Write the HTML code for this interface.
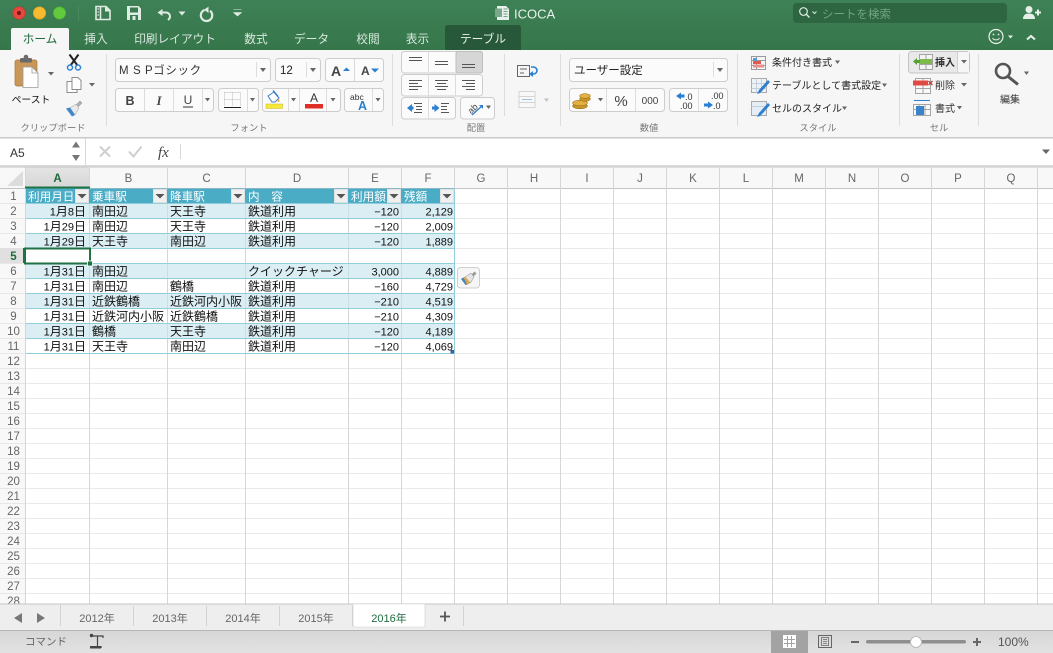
<!DOCTYPE html>
<html lang="ja"><head><meta charset="utf-8"><title>ICOCA</title>
<style>
html,body{margin:0;padding:0;width:1053px;height:653px;overflow:hidden;background:#fff}
svg{display:block;font-family:"Liberation Sans","Noto Sans CJK JP",sans-serif}
.rb{fill:#fbfbfb;stroke:#cdcdcd}
.tab{font-size:11.7px;fill:#d8e8dd;text-anchor:middle}
.lab{font-size:9.3px;fill:#777;text-anchor:middle}
.c{font-size:12px;fill:#111}
.n{font-size:11px;fill:#111;text-anchor:end}
.d{font-size:12px;fill:#111;text-anchor:end}
.d tspan{font-size:11px}
.h{font-size:11.6px;fill:#fff}
.cl{font-size:11.5px;fill:#666;text-anchor:middle}
.rl{font-size:11.5px;fill:#666;text-anchor:middle}
.sh{font-size:11px;fill:#666;text-anchor:middle}
.st{font-size:10px;fill:#222}
.ar{fill:#666}
</style></head><body>
<svg width="1053" height="653" viewBox="0 0 1053 653" xmlns="http://www.w3.org/2000/svg">
<defs>
<linearGradient id="tb" x1="0" y1="0" x2="0" y2="1"><stop offset="0" stop-color="#3f8156"/><stop offset="1" stop-color="#35764a"/></linearGradient>
<linearGradient id="sb" x1="0" y1="0" x2="0" y2="1"><stop offset="0" stop-color="#d6d6d6"/><stop offset="1" stop-color="#e2e2e2"/></linearGradient>
<linearGradient id="hl" x1="0" y1="0" x2="0" y2="1"><stop offset="0" stop-color="#e4e4e4"/><stop offset="1" stop-color="#d6d6d6"/></linearGradient>
<pattern id="hg" x="0" y="188.500" width="1053" height="15" patternUnits="userSpaceOnUse"><rect y="14.500" width="1053" height="1" fill="#d6d6d6"/></pattern>
</defs>

<!-- title bar -->
<rect width="1053" height="50" fill="url(#tb)"/>
<circle cx="19" cy="13" r="6.200" fill="#e6483f" stroke="#c5362e" stroke-width=".7"/><circle cx="19" cy="13" r="2.100" fill="#7d1712"/>
<circle cx="39.500" cy="13" r="6.200" fill="#f6bb30" stroke="#d89e25" stroke-width=".7"/>
<circle cx="59.500" cy="13" r="6.200" fill="#62ca3e" stroke="#4cab2f" stroke-width=".7"/>
<line x1="78.500" y1="5" x2="78.500" y2="21" stroke="#4a8a60"/>
<g fill="none" stroke="#dfece3" stroke-width="1.600">
<path d="M96 6.500h10l4 4v9h-14z"/><path d="M100.500 6.500v13"/>
</g>
<path d="M105 6.500v5h5z" fill="#dfece3"/>
<path d="M97.500 9h1.500M97.500 12h1.500M97.500 15h1.500" stroke="#dfece3" stroke-width="1.200"/>
<path d="M127 6h11.500l2.500 2.500V20h-14z" fill="#dfece3"/>
<rect x="130" y="7.500" width="8" height="5" fill="#3b7b50"/><rect x="130" y="15" width="8" height="5" fill="#3b7b50"/><rect x="132.500" y="16" width="3" height="4" fill="#dfece3"/>
<path d="M157.500 12.500l5 -3.500v7z" fill="#dfece3"/>
<path d="M161 12.500h5.500a4 4 0 0 1 3.500 4c0 1.500 -1 2.700 -2 3.500" fill="none" stroke="#dfece3" stroke-width="2"/>
<path d="M178.500 11.500h7l-3.500 4z" fill="#dfece3"/>
<path d="M204.500 10a5.700 5.700 0 1 0 5.500 .8" fill="none" stroke="#dfece3" stroke-width="2.200"/>
<path d="M204 9.800l4.500 -3.200v6.400z" fill="#dfece3"/>
<path d="M233.500 9.500h8M233.500 12.500h8l-4 3.500z" fill="#dfece3" stroke="#dfece3" stroke-width=".6"/>
<!-- doc title -->
<path d="M497 6h9l3 3v11h-12z" fill="#e9f1ec"/><rect x="495" y="8.500" width="7" height="8.500" fill="#7aa88a"/><path d="M503.500 9h4M503.500 11.500h4M503.500 14h4M503.500 16.500h4" stroke="#6e9f80"/>
<text x="514" y="18.500" font-size="13" fill="#e8f2eb">ICOCA</text>
<!-- search -->
<rect x="793" y="3" width="214" height="20" rx="4" fill="#2d6640"/>
<circle cx="803.500" cy="11.500" r="3.800" fill="none" stroke="#dfece3" stroke-width="1.200"/><path d="M806.500 14.500l3 3" stroke="#dfece3" stroke-width="1.400"/>
<path d="M812.500 11.500l2 2l2 -2" fill="none" stroke="#dfece3"/>
<text x="822" y="18" font-size="11.500" fill="#72a583">シートを検索</text>
<circle cx="1029" cy="9.500" r="3.500" fill="#e6f0e9"/><path d="M1023 19c0 -4 2.500 -5.500 6 -5.500s6 1.500 6 5.500z" fill="#e6f0e9"/><path d="M1035 12.500h6M1038 9.500v6" stroke="#e6f0e9" stroke-width="2"/>
<!-- tabs -->
<path d="M11 50V30q0 -2 2 -2h54q2 0 2 2v20z" fill="#f6f6f6"/>
<text x="40" y="43" font-size="11.700" fill="#1f6b3d" text-anchor="middle">ホーム</text>
<text class="tab" x="96" y="43">挿入</text>
<text class="tab" x="175" y="43">印刷レイアウト</text>
<text class="tab" x="256" y="43">数式</text>
<text class="tab" x="311.500" y="43">データ</text>
<text class="tab" x="368" y="43">校閲</text>
<text class="tab" x="417.500" y="43">表示</text>
<path d="M445 50V28q0 -3 3 -3h70q3 0 3 3v22z" fill="#28583a"/>
<text x="483" y="43" font-size="11.700" fill="#e8f2eb" text-anchor="middle">テーブル</text>
<circle cx="996" cy="36.500" r="7" fill="none" stroke="#e6f0e9" stroke-width="1.200"/><circle cx="993.500" cy="34.500" r=".9" fill="#e6f0e9"/><circle cx="998.500" cy="34.500" r=".9" fill="#e6f0e9"/><path d="M992.500 38c1.500 2.500 5.500 2.500 7 0" fill="none" stroke="#e6f0e9"/>
<path d="M1008 35.500h5l-2.500 3z" fill="#e6f0e9"/>
<path d="M1027 39.500l4 -3.500l4 3.500" fill="none" stroke="#e6f0e9" stroke-width="2"/>

<!-- ribbon -->
<rect y="50" width="1053" height="87" fill="#f6f6f6"/>
<rect y="137" width="1053" height="1.500" fill="#c9c9c9"/>
<path d="M106.500 54v72M392.500 54v72M504.500 54v62M560.500 54v72M737.500 54v72M899.500 54v72M978.500 54v72" stroke="#dcdcdc"/>
<text class="lab" x="53" y="131">クリップボード</text>
<text class="lab" x="249" y="131">フォント</text>
<text class="lab" x="476" y="131">配置</text>
<text class="lab" x="649" y="131">数値</text>
<text class="lab" x="818" y="131">スタイル</text>
<text class="lab" x="939" y="131">セル</text>

<!-- clipboard -->
<rect x="15" y="60" width="22" height="26" rx="2" fill="#c99758" stroke="#a9763c" stroke-width=".7"/>
<rect x="20" y="58" width="12" height="4.500" rx="1.500" fill="#6a6a6a"/><circle cx="26" cy="57" r="2.300" fill="#6a6a6a"/>
<path d="M23 67h9l6 6v14.500H23z" fill="#fff" stroke="#9a9a9a" stroke-width=".8"/><path d="M32 67v6h6" fill="none" stroke="#9a9a9a" stroke-width=".8"/>
<path class="ar" d="M48 72h6l-3 3.500z"/>
<text x="31" y="103" font-size="9.800" fill="#111" text-anchor="middle">ペースト</text>
<path d="M69.500 54.500l8 11M78.500 54.500l-8 11" stroke="#222" stroke-width="2"/>
<circle cx="70" cy="67.500" r="2.500" fill="none" stroke="#2f80d0" stroke-width="1.500"/><circle cx="78" cy="67.500" r="2.500" fill="none" stroke="#2f80d0" stroke-width="1.500"/>
<path d="M72 77.500h6l3 3v9h-4v3h-10v-11h5z" fill="#fff" stroke="#8c8c8c"/><path d="M72 81.500v8h5" fill="none" stroke="#8c8c8c"/>
<path class="ar" d="M89 83h6l-3 3.500z"/>
<path d="M76 105l4 -4l2 2l-4 4z" fill="#b0b0b0" stroke="#8a8a8a" stroke-width=".5"/><path d="M70 108l6 -4l3 4l-4 7z" fill="#e9e9e9" stroke="#9a9a9a" stroke-width=".5"/><path d="M66 108.500l4 -1l5 7.500l-3 1.500z" fill="#3f86cb"/>

<!-- font -->
<rect class="rb" x="115.500" y="58.500" width="155" height="23" rx="3"/><path d="M256.500 62v15" stroke="#ddd"/><path class="ar" d="M260 68h6l-3 4z"/>
<text x="119" y="74" font-size="11.500" fill="#333" letter-spacing=".6">M S  Pゴシック</text>
<rect class="rb" x="275.500" y="58.500" width="45" height="23" rx="3"/><path d="M306.500 62v15" stroke="#ddd"/><path class="ar" d="M310 68h6l-3 4z"/>
<text x="280" y="74" font-size="11.500" fill="#222">12</text>
<rect class="rb" x="325.500" y="58.500" width="58" height="23" rx="3" fill="#f3f3f3"/><path d="M354.500 59v22" stroke="#d8d8d8"/>
<text x="331" y="76" font-size="14" font-weight="700" fill="#444">A</text><path d="M343 71l3.500 -3.500l3.500 3.500z" fill="#2b7fd0"/>
<text x="361" y="75" font-size="12" font-weight="700" fill="#444">A</text><path d="M371 68.500h8l-4 4z" fill="#2b7fd0"/>
<rect class="rb" x="115.500" y="88.500" width="98" height="23" rx="3"/><path d="M144.500 89v22M173.500 89v22M202.500 89v22" stroke="#dcdcdc"/>
<text x="130" y="105" font-size="12.500" font-weight="700" fill="#444" text-anchor="middle">B</text>
<text x="159" y="105" font-size="12.500" font-weight="700" font-style="italic" font-family="Liberation Serif" fill="#444" text-anchor="middle">I</text>
<text x="188" y="104" font-size="12" fill="#444" text-anchor="middle">U</text><path d="M183 107h10" stroke="#333"/>
<path class="ar" d="M205 98h5l-2.500 3.500z"/>
<rect class="rb" x="218.500" y="88.500" width="40" height="23" rx="3"/><path d="M247.500 89v22" stroke="#dcdcdc"/>
<path d="M224.500 92.500h16v14M224.500 92.500v14M232.500 92.500v14M224.500 99.500h16" stroke="#bbb" stroke-dasharray="1 1" fill="none"/><path d="M224 107.500h17" stroke="#222"/>
<path class="ar" d="M250 98h5l-2.500 3.500z"/>
<rect class="rb" x="262.500" y="88.500" width="78" height="23" rx="3"/><path d="M299.500 89v22M326.500 89v22M288.500 89v22" stroke="#dcdcdc"/>
<path d="M268 96l6 -4l5 6l-4 4h-3z" fill="#fff" stroke="#3c7fc4"/><path d="M273 90.500l5 6" stroke="#3c7fc4" stroke-width="1.500"/><path d="M278.500 99c1 1.200 1.500 2.500 0 3c-1.500 -.5 -1 -1.800 0 -3z" fill="#e8a33a"/>
<rect x="266" y="104" width="16.500" height="4.500" fill="#f6e838" stroke="#c7b92b" stroke-width=".5"/>
<path class="ar" d="M291 98h5l-2.500 3.500z"/>
<text x="314" y="102" font-size="12" fill="#333" text-anchor="middle">A</text><rect x="305" y="104" width="18" height="4.500" fill="#df2f24"/>
<path class="ar" d="M330.500 98h5l-2.500 3.500z"/>
<rect class="rb" x="344.500" y="88.500" width="39" height="23" rx="3"/><path d="M372.500 89v22" stroke="#dcdcdc"/>
<text x="350" y="100" font-size="8.500" fill="#333">abc</text><text x="358" y="110" font-size="12.500" font-weight="700" fill="#2b7fd0">A</text>
<path class="ar" d="M375.500 98h5l-2.500 3.500z"/>

<!-- alignment -->
<rect class="rb" x="401.500" y="51.500" width="81" height="21.500" rx="3"/><rect x="456" y="51.500" width="26.500" height="21.500" rx="2" fill="#d6d6d6" stroke="#bdbdbd"/><path d="M428.500 52v21" stroke="#dcdcdc"/>
<path d="M409 57.500h13M409 60.500h13M435 61.500h13M435 64.500h13M462 64.500h13M462 67.500h13" stroke="#555"/>
<rect class="rb" x="401.500" y="74.500" width="81" height="21.500" rx="3"/><path d="M428.500 75v21M455.500 75v21" stroke="#dcdcdc"/>
<path d="M409 80.500h13M409 83.500h9M409 86.500h13M409 89.500h9M435 80.500h13M437 83.500h9M435 86.500h13M437 89.500h9M462 80.500h13M466 83.500h9M462 86.500h13M466 89.500h9" stroke="#555"/>
<rect class="rb" x="401.500" y="97.500" width="54" height="21.500" rx="3"/><path d="M428.500 98v21" stroke="#dcdcdc"/>
<path d="M414 103.500h8M416 106.500h6M416 109.500h6M414 112.500h8M441 103.500h8M441 106.500h6M441 109.500h6M441 112.500h8" stroke="#555"/>
<path d="M407 108l5 -4v2.500h1.500v3H412v2.500z" fill="#2b7fd0"/><path d="M439.500 108l-5 -4v2.500h-2.500v3h2.500v2.500z" fill="#2b7fd0"/>
<rect class="rb" x="460.500" y="97.500" width="34" height="21.500" rx="3"/>
<text x="467" y="112" font-size="9" fill="#444" transform="rotate(-45 472 108)">ab</text><path d="M472 115l10 -9" stroke="#2b7fd0" stroke-width="1.200"/><path d="M479 105h4v4z" fill="#2b7fd0"/>
<path class="ar" d="M486 105.500h5l-2.500 3.500z"/>
<path d="M517.500 65.500h12v11h-12zM520 69h7M520 73h4" fill="none" stroke="#666"/><path d="M531 67h2.500a2.500 2.500 0 0 1 0 7H531" fill="none" stroke="#2b7fd0" stroke-width="1.600"/><path d="M533 71v6l-4 -3z" fill="#2b7fd0"/>
<path d="M519 91.500h16v16h-16zM519 96.500h16M519 102.500h16" fill="#f8f8f8" stroke="#d4d4d4"/><path d="M522 99.500h10" stroke="#9cc3e6"/>
<path d="M544 98.500h5l-2.500 3.500z" fill="#c4c4c4"/>

<!-- number -->
<rect class="rb" x="569.500" y="58.500" width="158" height="23" rx="3"/><path d="M713.500 62v15" stroke="#ddd"/><path class="ar" d="M717 68h6l-3 4z"/>
<text x="574" y="74" font-size="11.500" fill="#222">ユーザー設定</text>
<rect class="rb" x="569.500" y="88.500" width="95" height="23" rx="3"/><path d="M606.500 89v22M635.500 89v22" stroke="#dcdcdc"/>
<ellipse cx="580" cy="106" rx="7.500" ry="2.800" fill="#c8952a" stroke="#8e6513" stroke-width=".5"/><ellipse cx="580" cy="103" rx="7.500" ry="2.800" fill="#e2b13f" stroke="#8e6513" stroke-width=".5"/>
<ellipse cx="585" cy="99" rx="5.500" ry="2.300" fill="#c8952a" stroke="#8e6513" stroke-width=".5"/><ellipse cx="585" cy="96" rx="5.500" ry="2.300" fill="#e2b13f" stroke="#8e6513" stroke-width=".5"/>
<path class="ar" d="M598 98h5l-2.500 3.500z"/>
<text x="621" y="106" font-size="15" fill="#444" text-anchor="middle">%</text>
<text x="650" y="104" font-size="10" fill="#444" text-anchor="middle">000</text>
<rect class="rb" x="669.500" y="88.500" width="58" height="23" rx="3"/><path d="M698.500 89v22" stroke="#dcdcdc"/>
<path d="M676 96l5 -3.500v2h3.500v3H681v2z" fill="#2b7fd0"/>
<text x="685" y="100" font-size="9" fill="#333">.0</text><text x="680" y="109" font-size="9" fill="#333">.00</text>
<text x="711" y="99" font-size="9" fill="#333">.00</text><text x="713" y="109" font-size="9" fill="#333">.0</text>
<path d="M713 105l-5 -3.500v2h-4v3h4v2z" fill="#2b7fd0"/>

<!-- styles -->
<g fill="none" stroke="#9a9a9a"><path d="M751.500 56.500h14v13h-14zM751.500 60.500h14M751.500 65.500h14M756.500 56.500v13"/></g>
<rect x="753" y="58" width="4" height="3" fill="#5a9bd5"/><rect x="753" y="61" width="8" height="3" fill="#e25b52"/><rect x="753" y="64.500" width="11" height="3" fill="#e88f88"/>
<text class="st" x="772" y="66">条件付き書式</text><path class="ar" d="M835 60.500h5l-2.500 3.500z"/>
<path d="M751.500 78.500h15v14h-15z" fill="#eef3f8" stroke="#aaa"/><path d="M751.500 83.500h15M751.500 88.500h15M756.500 78.500v14M761.500 78.500v14" stroke="#c4cfdb" fill="none"/>
<path d="M768 80l2 2l-7 8l-3 3l-3 1l2 -4z" fill="#2e7fd0"/>
<text class="st" x="772" y="89">テーブルとして書式設定</text><path class="ar" d="M882 83.500h5l-2.500 3.500z"/>
<path d="M751.500 101.500h15v14h-15z" fill="#e5edf5" stroke="#aaa"/><path d="M751.500 106.500h15" stroke="#c4cfdb"/>
<path d="M768 103l2 2l-7 8l-3 3l-3 1l2 -4z" fill="#2e7fd0"/>
<text class="st" x="772" y="112">セルのスタイル</text><path class="ar" d="M842 106.500h5l-2.500 3.500z"/>

<!-- cells -->
<rect x="908.500" y="51.500" width="61" height="21.500" rx="3" fill="#e9e9e9" stroke="#c4c4c4"/><path d="M957.500 52v21" stroke="#d0d0d0"/><rect x="958" y="52" width="11" height="20.500" fill="#f6f6f6"/>
<path d="M919.500 54.500h13v15h-13zM919.500 59.500h13M919.500 64.500h13M926 54.500v15" fill="#f4f4f4" stroke="#a5a5a5"/>
<rect x="920" y="59" width="12" height="5" fill="#7dba4c"/><path d="M913 61.500l4 -3.500v2h3v3h-3v2z" fill="#52a133"/>
<text x="935" y="66" font-size="10" font-weight="700" fill="#333">挿入</text><path class="ar" d="M961 60h6l-3 3.500z"/>
<path d="M915.500 78.500h15v15h-15zM915.500 88.500h15M923 78.500v15" fill="#f8f8f8" stroke="#a5a5a5"/><rect x="913" y="80.500" width="15" height="5" fill="#df4b42"/><path d="M928.500 81l4 4M932.500 81l-4 4" stroke="#cf3a32" stroke-width="1.300"/>
<text x="935" y="89" font-size="10" fill="#333">削除</text><path class="ar" d="M961 83h6l-3 3.500z"/>
<path d="M913.500 104.500h17v11h-17zM919 104.500v11M925 104.500v11M913.500 109.500h17" fill="#f8f8f8" stroke="#a5a5a5"/><rect x="916" y="106" width="8" height="9" fill="#3a82cb"/><path d="M914 100.500h16" stroke="#2b7fd0"/>
<text x="935" y="112" font-size="10" fill="#333">書式</text><path class="ar" d="M957 106h5l-2.500 3.500z"/>

<!-- editing -->
<circle cx="1003" cy="71" r="7" fill="none" stroke="#555" stroke-width="2.600"/><path d="M1008 76.500l10 8" stroke="#555" stroke-width="3"/>
<path class="ar" d="M1024 71.500h5l-2.500 3.500z"/>
<text x="1010" y="103" font-size="10" fill="#333" text-anchor="middle">編集</text>

<!-- formula bar -->
<rect y="138.500" width="1053" height="26.500" fill="#fff"/>
<rect y="165" width="1053" height="2.500" fill="#c4c4c4"/>
<rect y="165.500" width="1053" height=".8" fill="#f1f1f1"/>
<rect x="85" y="138.500" width="1" height="26.500" fill="#d8d8d8"/>
<text x="10" y="157" font-size="12" fill="#333">A5</text>
<path d="M72 147.500l4 -6l4 6zM72 155l4 6l4 -6z" fill="#777"/>
<path d="M100 146.500l10 10M110 146.500l-10 10" stroke="#cfcfcf" stroke-width="2"/>
<path d="M129 151.500l4.500 5l8 -10" fill="none" stroke="#cfcfcf" stroke-width="2"/>
<text x="158" y="157" font-size="15" font-style="italic" font-family="Liberation Serif" fill="#444">fx</text>
<rect x="180" y="144" width="1" height="15" fill="#d8d8d8"/>
<path class="ar" d="M1042 149.500h8l-4 4.500z"/>

<!-- sheet -->
<rect y="167.500" width="1053" height="21" fill="#f8f8f8"/>
<rect y="188" width="25" height="416" fill="#f8f8f8"/>
<rect x="25" y="188" width="1028" height="416" fill="url(#hg)"/>
<rect y="188" width="25" height="416" fill="url(#hg)"/>
<rect y="188" width="1053" height="1" fill="#c4c4c4"/>
<rect x="25" y="167.500" width="64" height="21" fill="url(#hl)"/>
<path d="M7 186L23 171V186z" fill="#dcdcdc"/>
<path d="M25.500 168v436M89.500 168v436M167.500 168v436M245.500 168v436M348.500 168v436M401.500 168v436M454.500 168v436M507.500 168v436M560.500 168v436M613.500 168v436M666.500 168v436M719.500 168v436M772.500 168v436M825.500 168v436M878.500 168v436M931.500 168v436M984.500 168v436M1037.500 168v436" stroke="#d6d6d6" fill="none"/>
<rect x="25" y="186.500" width="65" height="2" fill="#1f7244"/>
<rect y="248" width="25" height="15" fill="#e0e0e0"/>
<rect x="23" y="248" width="2" height="15" fill="#1f7244"/>

<text class="cl" x="57.500" y="182" style="fill:#1f6b3d;font-weight:700">A</text>
<text class="cl" x="128.500" y="182">B</text><text class="cl" x="206.500" y="182">C</text><text class="cl" x="297" y="182">D</text><text class="cl" x="375" y="182">E</text><text class="cl" x="428" y="182">F</text><text class="cl" x="481" y="182">G</text><text class="cl" x="534" y="182">H</text><text class="cl" x="587" y="182">I</text><text class="cl" x="640" y="182">J</text><text class="cl" x="693" y="182">K</text><text class="cl" x="746" y="182">L</text><text class="cl" x="799" y="182">M</text><text class="cl" x="852" y="182">N</text><text class="cl" x="905" y="182">O</text><text class="cl" x="958" y="182">P</text><text class="cl" x="1011" y="182">Q</text>

<text class="rl" x="13.500" y="200">1</text><text class="rl" x="13.500" y="215">2</text><text class="rl" x="13.500" y="230">3</text><text class="rl" x="13.500" y="245">4</text><text class="rl" x="13.500" y="260" style="fill:#1f6b3d;font-weight:700">5</text><text class="rl" x="13.500" y="275">6</text><text class="rl" x="13.500" y="290">7</text><text class="rl" x="13.500" y="305">8</text><text class="rl" x="13.500" y="320">9</text><text class="rl" x="13.500" y="335">10</text><text class="rl" x="13.500" y="350">11</text><text class="rl" x="13.500" y="365">12</text><text class="rl" x="13.500" y="380">13</text><text class="rl" x="13.500" y="395">14</text><text class="rl" x="13.500" y="410">15</text><text class="rl" x="13.500" y="425">16</text><text class="rl" x="13.500" y="440">17</text><text class="rl" x="13.500" y="455">18</text><text class="rl" x="13.500" y="470">19</text><text class="rl" x="13.500" y="485">20</text><text class="rl" x="13.500" y="500">21</text><text class="rl" x="13.500" y="515">22</text><text class="rl" x="13.500" y="530">23</text><text class="rl" x="13.500" y="545">24</text><text class="rl" x="13.500" y="560">25</text><text class="rl" x="13.500" y="575">26</text><text class="rl" x="13.500" y="590">27</text><text class="rl" x="13.500" y="605">28</text>

<!-- table fill -->
<rect x="26" y="188.500" width="428" height="15" fill="#4bacc6"/>
<g fill="#dbeef4"><rect x="26" y="204" width="428" height="14"/><rect x="26" y="234" width="428" height="14"/><rect x="26" y="264" width="428" height="14"/><rect x="26" y="294" width="428" height="14"/><rect x="26" y="324" width="428" height="14"/></g>
<path d="M89.500 204v14M167.500 204v14M245.500 204v14M348.500 204v14M401.500 204v14M89.500 234v14M167.500 234v14M245.500 234v14M348.500 234v14M401.500 234v14M89.500 264v14M167.500 264v14M245.500 264v14M348.500 264v14M401.500 264v14M89.500 294v14M167.500 294v14M245.500 294v14M348.500 294v14M401.500 294v14M89.500 324v14M167.500 324v14M245.500 324v14M348.500 324v14M401.500 324v14" stroke="#c8dfe6"/>
<path d="M26 203.500h428M26 218.500h428M26 233.500h428M26 248.500h428M26 263.500h428M26 278.500h428M26 293.500h428M26 308.500h428M26 323.500h428M26 338.500h428M26 353.500h428M454.500 188v166" stroke="#92cddc" fill="none"/>
<rect x="450.500" y="350" width="3.500" height="3.500" fill="#3b5f9d"/>

<!-- header text -->
<text class="h" x="28" y="200.500">利用月日</text><text class="h" x="92" y="200.500">乗車駅</text><text class="h" x="170" y="200.500">降車駅</text><text class="h" x="248" y="200.500">内　容</text><text class="h" x="351" y="200.500">利用額</text><text class="h" x="404" y="200.500">残額</text>
<g>
<rect x="75.500" y="189.500" width="13" height="13" fill="#f0f0f0" stroke="#e0e0e0"/><path d="M77.500 194h9l-4.500 4.500z" fill="#555"/>
<rect x="153.500" y="189.500" width="13" height="13" fill="#f0f0f0" stroke="#e0e0e0"/><path d="M155.500 194h9l-4.500 4.500z" fill="#555"/>
<rect x="231.500" y="189.500" width="13" height="13" fill="#f0f0f0" stroke="#e0e0e0"/><path d="M233.500 194h9l-4.500 4.500z" fill="#555"/>
<rect x="334.500" y="189.500" width="13" height="13" fill="#f0f0f0" stroke="#e0e0e0"/><path d="M336.500 194h9l-4.500 4.500z" fill="#555"/>
<rect x="387.500" y="189.500" width="13" height="13" fill="#f0f0f0" stroke="#e0e0e0"/><path d="M389.500 194h9l-4.500 4.500z" fill="#555"/>
<rect x="440.500" y="189.500" width="13" height="13" fill="#f0f0f0" stroke="#e0e0e0"/><path d="M442.500 194h9l-4.500 4.500z" fill="#555"/>
</g>

<!-- data -->
<text class="d" x="86" y="215.500"><tspan>1</tspan>月<tspan>8</tspan>日</text><text class="c" x="92" y="215.500">南田辺</text><text class="c" x="170" y="215.500">天王寺</text><text class="c" x="248" y="215.500">鉄道利用</text><text class="n" x="399" y="215.500">−120</text><text class="n" x="453" y="215.500">2,129</text>
<text class="d" x="86" y="230.500"><tspan>1</tspan>月<tspan>29</tspan>日</text><text class="c" x="92" y="230.500">南田辺</text><text class="c" x="170" y="230.500">天王寺</text><text class="c" x="248" y="230.500">鉄道利用</text><text class="n" x="399" y="230.500">−120</text><text class="n" x="453" y="230.500">2,009</text>
<text class="d" x="86" y="245.500"><tspan>1</tspan>月<tspan>29</tspan>日</text><text class="c" x="92" y="245.500">天王寺</text><text class="c" x="170" y="245.500">南田辺</text><text class="c" x="248" y="245.500">鉄道利用</text><text class="n" x="399" y="245.500">−120</text><text class="n" x="453" y="245.500">1,889</text>
<text class="d" x="86" y="275.500"><tspan>1</tspan>月<tspan>31</tspan>日</text><text class="c" x="92" y="275.500">南田辺</text><text class="c" x="248" y="275.500">クイックチャージ</text><text class="n" x="399" y="275.500">3,000</text><text class="n" x="453" y="275.500">4,889</text>
<text class="d" x="86" y="290.500"><tspan>1</tspan>月<tspan>31</tspan>日</text><text class="c" x="92" y="290.500">南田辺</text><text class="c" x="170" y="290.500">鶴橋</text><text class="c" x="248" y="290.500">鉄道利用</text><text class="n" x="399" y="290.500">−160</text><text class="n" x="453" y="290.500">4,729</text>
<text class="d" x="86" y="305.500"><tspan>1</tspan>月<tspan>31</tspan>日</text><text class="c" x="92" y="305.500">近鉄鶴橋</text><text class="c" x="170" y="305.500">近鉄河内小阪</text><text class="c" x="248" y="305.500">鉄道利用</text><text class="n" x="399" y="305.500">−210</text><text class="n" x="453" y="305.500">4,519</text>
<text class="d" x="86" y="320.500"><tspan>1</tspan>月<tspan>31</tspan>日</text><text class="c" x="92" y="320.500">近鉄河内小阪</text><text class="c" x="170" y="320.500">近鉄鶴橋</text><text class="c" x="248" y="320.500">鉄道利用</text><text class="n" x="399" y="320.500">−210</text><text class="n" x="453" y="320.500">4,309</text>
<text class="d" x="86" y="335.500"><tspan>1</tspan>月<tspan>31</tspan>日</text><text class="c" x="92" y="335.500">鶴橋</text><text class="c" x="170" y="335.500">天王寺</text><text class="c" x="248" y="335.500">鉄道利用</text><text class="n" x="399" y="335.500">−120</text><text class="n" x="453" y="335.500">4,189</text>
<text class="d" x="86" y="350.500"><tspan>1</tspan>月<tspan>31</tspan>日</text><text class="c" x="92" y="350.500">天王寺</text><text class="c" x="170" y="350.500">南田辺</text><text class="c" x="248" y="350.500">鉄道利用</text><text class="n" x="399" y="350.500">−120</text><text class="n" x="453" y="350.500">4,069</text>

<!-- active cell -->
<rect x="25" y="248.500" width="65" height="15" fill="none" stroke="#1f7244" stroke-width="2"/>
<rect x="87.500" y="261" width="5" height="5" fill="#1f7244" stroke="#fff" stroke-width=".8"/>

<!-- smart tag -->
<rect x="457.500" y="267.500" width="22" height="20.500" rx="3" fill="#f6f6f6" stroke="#cfcfcf"/>
<path d="M471 275l3.500 -3.500l2 2l-3.500 3.500z" fill="#999"/><path d="M465 277l6 -4l3 4l-3.500 6z" fill="#e4e4e4" stroke="#8a8a8a" stroke-width=".5"/><path d="M461 279l4 -2.500l5.500 6.500l-4 2z" fill="#e1a64b"/><path d="M461 279l2.500 -1.500l3.500 7l-1.500 .5z" fill="#3f86cb"/>

<!-- sheet tabs -->
<rect y="604" width="1053" height="26" fill="#eeeeee"/>
<rect y="603.500" width="1053" height="1" fill="#c4c4c4"/>
<path d="M14 618l8 -5v10z" fill="#777"/><path d="M45 618l-8 -5v10z" fill="#777"/>
<path d="M60.500 604v22M133.500 606v20M206.500 606v20M279.500 606v20M352.500 606v20M463.500 606v20" stroke="#d2d2d2"/>
<text class="sh" x="97" y="622">2012年</text><text class="sh" x="170" y="622">2013年</text><text class="sh" x="243" y="622">2014年</text><text class="sh" x="316" y="622">2015年</text>
<path d="M353 604h72v21q0 2 -2 2h-68q-2 0 -2 -2z" fill="#fff" stroke="#cfcfcf" stroke-width=".6"/>
<text x="389" y="622" font-size="11" fill="#1f6b3d" text-anchor="middle">2016年</text>
<path d="M440 616.500h10M445 611.500v10" stroke="#555" stroke-width="1.800"/>

<!-- status -->
<rect y="630" width="1053" height="23" fill="url(#sb)"/>
<rect y="630" width="1053" height="1" fill="#b5b5b5"/>
<text x="25" y="645" font-size="10.500" fill="#666">コマンド</text>
<path d="M92 636h11v2M97.500 636v10M92 647h10" fill="none" stroke="#444" stroke-width="1.200"/><circle cx="91.500" cy="635.500" r="1.700" fill="#444"/><rect x="90" y="646" width="11" height="2.500" fill="#444"/>
<rect x="771" y="631" width="37" height="22" fill="#a3a3a3"/>
<path d="M783.500 635.500h12v12h-12zM783.500 639.500h12M783.500 643.500h12M787.500 635.500v12M791.500 635.500v12" fill="#fff" stroke="#a3a3a3"/><path d="M783.500 635.500h12v12h-12z" fill="none" stroke="#fff"/>
<path d="M818.500 635.500h13v12h-13z" fill="none" stroke="#666"/><path d="M821.500 637.500h7v8h-7zM823 639.500h4M823 641.500h4M823 643.500h4" fill="none" stroke="#666" stroke-width=".8"/>
<path d="M851 642h8" stroke="#666" stroke-width="2"/>
<rect x="866" y="640" width="100" height="3.500" rx="1.700" fill="#8f8f8f"/>
<circle cx="916" cy="642" r="5.500" fill="#fff" stroke="#bcbcbc"/>
<path d="M973 642h8M977 638v8" stroke="#666" stroke-width="2"/>
<text x="998" y="646" font-size="12" fill="#555">100%</text>
</svg>
</body></html>
